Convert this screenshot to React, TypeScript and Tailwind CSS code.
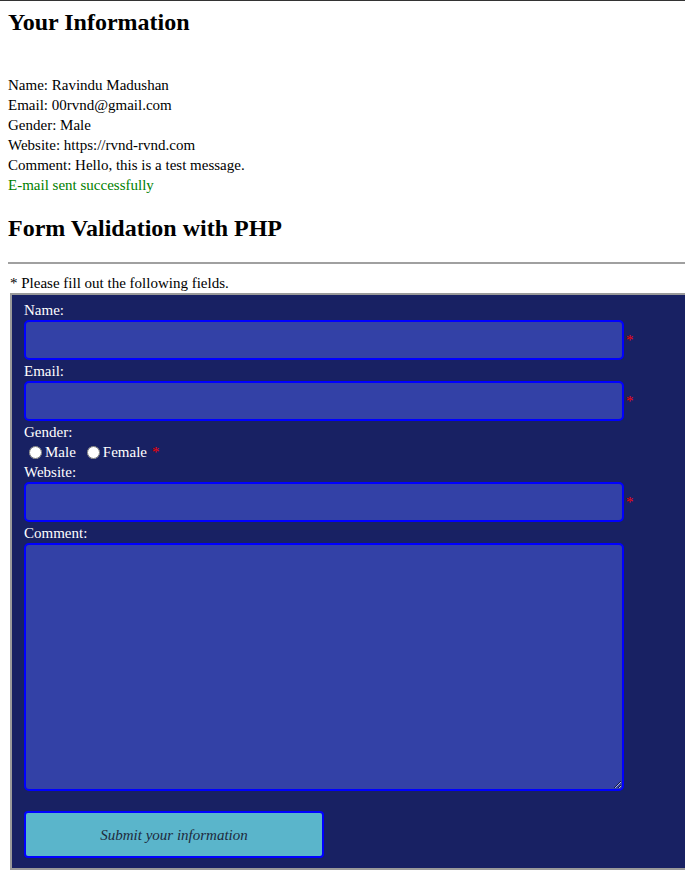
export default function App() {
  const input =
    "block h-[40px] w-[600px] rounded-[5px] border-2 border-[#0000ff] bg-[#3341a6] px-2 text-white outline-none";

  return (
    <div className="min-h-[876px] border-t border-[#333] bg-white px-2 font-['Liberation_Serif',serif] text-[15px] leading-[20px] text-black">
      <h2 className="pt-[8px] text-[24px] font-bold leading-[27px]">Your Information</h2>

      <div className="mt-[39px]">
        <div>Name: Ravindu Madushan</div>
        <div>Email: 00rvnd@gmail.com</div>
        <div>Gender: Male</div>
        <div>Website: https://rvnd-rvnd.com</div>
        <div>Comment: Hello, this is a test message.</div>
        <div className="text-[#008000]">E-mail sent successfully</div>
      </div>

      <h2 className="mt-[20px] text-[24px] font-bold leading-[27px]">Form Validation with PHP</h2>

      <hr className="-mr-2 mt-[20px] border-t-2 border-[#a0a0a0]" />

      <p className="mt-[9px] pl-[2px]">* Please fill out the following fields.</p>

      <form className="-mr-8 ml-[2px] border-2 border-[#9a9a9a] bg-[#182163] px-3 pb-[10px] pt-[5px] text-white">
        <label className="block">Name:</label>
        <div className="flex items-center">
          <input className={input} />
          <span className="ml-[2px] text-[#ff0000]">*</span>
        </div>

        <label className="mt-px block">Email:</label>
        <div className="flex items-center">
          <input className={input} />
          <span className="ml-[2px] text-[#ff0000]">*</span>
        </div>

        <label className="mt-px block">Gender:</label>
        <div className="flex items-center pl-[5px]">
          <input type="radio" name="g" className="m-0 h-[13px] w-[13px]" />
          <span className="ml-[3px]">Male</span>
          <input type="radio" name="g" className="m-0 ml-[11px] h-[13px] w-[13px]" />
          <span className="ml-[3px]">Female</span>
          <span className="ml-[5px] text-[#ff0000]">*</span>
        </div>

        <label className="block">Website:</label>
        <div className="flex items-center">
          <input className={input} />
          <span className="ml-[2px] text-[#ff0000]">*</span>
        </div>

        <label className="mt-px block">Comment:</label>
        <textarea className="block h-[248px] w-[600px] resize rounded-[5px] border-2 border-[#0000ff] bg-[#3341a6] p-2 text-white outline-none" />

        <button
          type="button"
          className="mt-[20px] block h-[47px] w-[300px] rounded-[4px] border-2 border-[#0000ff] bg-[#5ab5cb] font-[cursive] text-[15px] italic text-[#1e2a3c]"
        >
          Submit your information
        </button>
      </form>
    </div>
  );
}
